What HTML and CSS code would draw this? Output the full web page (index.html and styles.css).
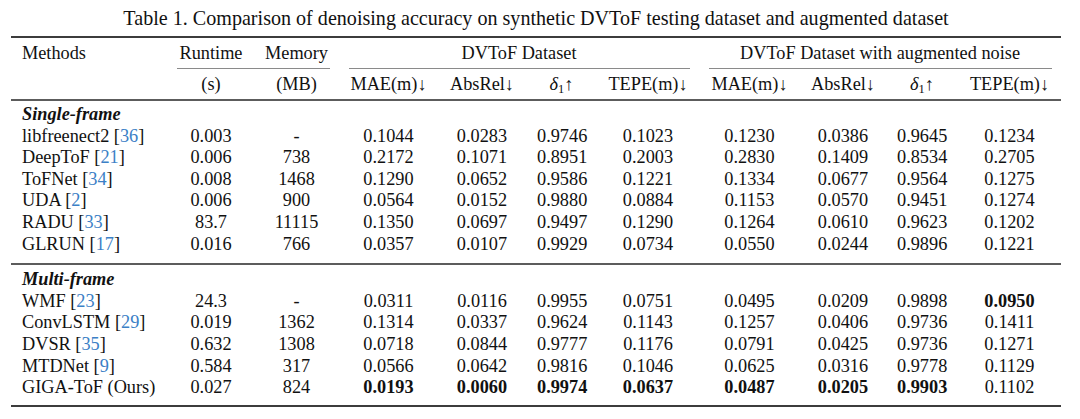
FILE: index.html
```html
<!DOCTYPE html>
<html>
<head>
<meta charset="utf-8">
<title>Table 1</title>
<link rel="stylesheet" href="styles.css">
</head>
<body>
<div class="page">
  <div class="caption">Table 1. Comparison of denoising accuracy on synthetic DVToF testing dataset and augmented dataset</div>
  <table class="results">
    <colgroup>
      <col class="c-method">
      <col class="c-runtime">
      <col class="c-memory">
      <col class="c-mae1">
      <col class="c-abs1">
      <col class="c-d1">
      <col class="c-tepe1">
      <col class="c-mae2">
      <col class="c-abs2">
      <col class="c-d2">
      <col class="c-tepe2">
    </colgroup>
    <thead>
      <tr class="hdr1">
        <th class="left">Methods</th>
        <th class="cm-right">Runtime</th>
        <th class="cm-left">Memory</th>
        <th colspan="4" class="cm-group">DVToF Dataset</th>
        <th colspan="4" class="cm-group">DVToF Dataset with augmented noise</th>
      </tr>
      <tr class="hdr2">
        <th class="left"></th>
        <th>(s)</th>
        <th>(MB)</th>
        <th>MAE(m)↓</th>
        <th>AbsRel↓</th>
        <th><i class="greek">δ</i><sub>1</sub>↑</th>
        <th>TEPE(m)↓</th>
        <th>MAE(m)↓</th>
        <th>AbsRel↓</th>
        <th><i class="greek">δ</i><sub>1</sub>↑</th>
        <th>TEPE(m)↓</th>
      </tr>
    </thead>
    <tbody class="group group-first">
      <tr class="group-title"><td class="left" colspan="11"><b><i>Single-frame</i></b></td></tr>
      <tr><td class="left">libfreenect2 [<span class="cite">36</span>]</td><td>0.003</td><td>-</td><td>0.1044</td><td>0.0283</td><td>0.9746</td><td>0.1023</td><td>0.1230</td><td>0.0386</td><td>0.9645</td><td>0.1234</td></tr>
      <tr><td class="left">DeepToF [<span class="cite">21</span>]</td><td>0.006</td><td>738</td><td>0.2172</td><td>0.1071</td><td>0.8951</td><td>0.2003</td><td>0.2830</td><td>0.1409</td><td>0.8534</td><td>0.2705</td></tr>
      <tr><td class="left">ToFNet [<span class="cite">34</span>]</td><td>0.008</td><td>1468</td><td>0.1290</td><td>0.0652</td><td>0.9586</td><td>0.1221</td><td>0.1334</td><td>0.0677</td><td>0.9564</td><td>0.1275</td></tr>
      <tr><td class="left">UDA [<span class="cite">2</span>]</td><td>0.006</td><td>900</td><td>0.0564</td><td>0.0152</td><td>0.9880</td><td>0.0884</td><td>0.1153</td><td>0.0570</td><td>0.9451</td><td>0.1274</td></tr>
      <tr><td class="left">RADU [<span class="cite">33</span>]</td><td>83.7</td><td>11115</td><td>0.1350</td><td>0.0697</td><td>0.9497</td><td>0.1290</td><td>0.1264</td><td>0.0610</td><td>0.9623</td><td>0.1202</td></tr>
      <tr class="last"><td class="left">GLRUN [<span class="cite">17</span>]</td><td>0.016</td><td>766</td><td>0.0357</td><td>0.0107</td><td>0.9929</td><td>0.0734</td><td>0.0550</td><td>0.0244</td><td>0.9896</td><td>0.1221</td></tr>
    </tbody>
    <tbody class="group group-second">
      <tr class="group-title"><td class="left" colspan="11"><b><i>Multi-frame</i></b></td></tr>
      <tr><td class="left">WMF [<span class="cite">23</span>]</td><td>24.3</td><td>-</td><td>0.0311</td><td>0.0116</td><td>0.9955</td><td>0.0751</td><td>0.0495</td><td>0.0209</td><td>0.9898</td><td><b>0.0950</b></td></tr>
      <tr><td class="left">ConvLSTM [<span class="cite">29</span>]</td><td>0.019</td><td>1362</td><td>0.1314</td><td>0.0337</td><td>0.9624</td><td>0.1143</td><td>0.1257</td><td>0.0406</td><td>0.9736</td><td>0.1411</td></tr>
      <tr><td class="left">DVSR [<span class="cite">35</span>]</td><td>0.632</td><td>1308</td><td>0.0718</td><td>0.0844</td><td>0.9777</td><td>0.1176</td><td>0.0791</td><td>0.0425</td><td>0.9736</td><td>0.1271</td></tr>
      <tr><td class="left">MTDNet [<span class="cite">9</span>]</td><td>0.584</td><td>317</td><td>0.0566</td><td>0.0642</td><td>0.9816</td><td>0.1046</td><td>0.0625</td><td>0.0316</td><td>0.9778</td><td>0.1129</td></tr>
      <tr class="last"><td class="left">GIGA-ToF (Ours)</td><td>0.027</td><td>824</td><td><b>0.0193</b></td><td><b>0.0060</b></td><td><b>0.9974</b></td><td><b>0.0637</b></td><td><b>0.0487</b></td><td><b>0.0205</b></td><td><b>0.9903</b></td><td>0.1102</td></tr>
    </tbody>
  </table>
</div>
</body>
</html>
```

FILE: styles.css
```css
html, body {
  margin: 0;
  padding: 0;
  background: #ffffff;
}

body {
  font-family: "Liberation Serif", "Times New Roman", serif;
  font-size: 18.3px;
  color: #111111;
}

.page {
  padding-left: 11px;
}

.caption {
  width: 1050px;
  text-align: center;
  font-size: 20.1px;
  line-height: 22px;
  padding: 7px 0 7px;
}

.results {
  width: 1050px;
  table-layout: fixed;
  border-collapse: separate;
  border-spacing: 0;
}

.c-method { width: 157px; }
.c-runtime { width: 86px; }
.c-memory { width: 85px; }
.c-mae1 { width: 99px; }
.c-abs1 { width: 88px; }
.c-d1 { width: 71px; }
.c-tepe1 { width: 102px; }
.c-mae2 { width: 101px; }
.c-abs2 { width: 86px; }
.c-d2 { width: 72px; }
.c-tepe2 { width: 103px; }

.results th,
.results td {
  font-weight: normal;
  text-align: center;
  padding: 0 11px;
  line-height: 21.6px;
  white-space: nowrap;
}

.results .left {
  text-align: left;
}

.results b {
  font-weight: bold;
}

/* header row 1 */
.hdr1 th {
  border-top: 2px solid #3c3c3c;
  padding-top: 4px;
  padding-bottom: 5px;
  line-height: 22px;
}

.cm-right,
.cm-left,
.cm-group {
  background-image: linear-gradient(#8a8a8a, #8a8a8a);
  background-repeat: no-repeat;
}

.cm-right {
  background-size: calc(100% - 9px) 1px;
  background-position: right bottom;
}

.cm-left {
  background-size: calc(100% - 9px) 1px;
  background-position: left bottom;
}

.cm-group {
  background-size: calc(100% - 19px) 1px;
  background-position: 10px bottom;
}

/* header row 2 */
.hdr2 th {
  padding-top: 4px;
  padding-bottom: 4px;
  line-height: 22px;
  border-bottom: 2px solid #5c5c5c;
}

.greek {
  font-style: italic;
}

sub {
  font-size: 68%;
  line-height: 0;
  vertical-align: -0.25em;
}

.cite {
  color: #3b80c6;
}

/* groups */
.group-first .group-title td {
  padding-top: 3px;
}

.group-first .last td {
  padding-bottom: 8px;
}

.group-second .group-title td {
  border-top: 2px solid #5c5c5c;
  padding-top: 4px;
}

.group-second .last td {
  padding-bottom: 6px;
  border-bottom: 2px solid #3c3c3c;
}
```
